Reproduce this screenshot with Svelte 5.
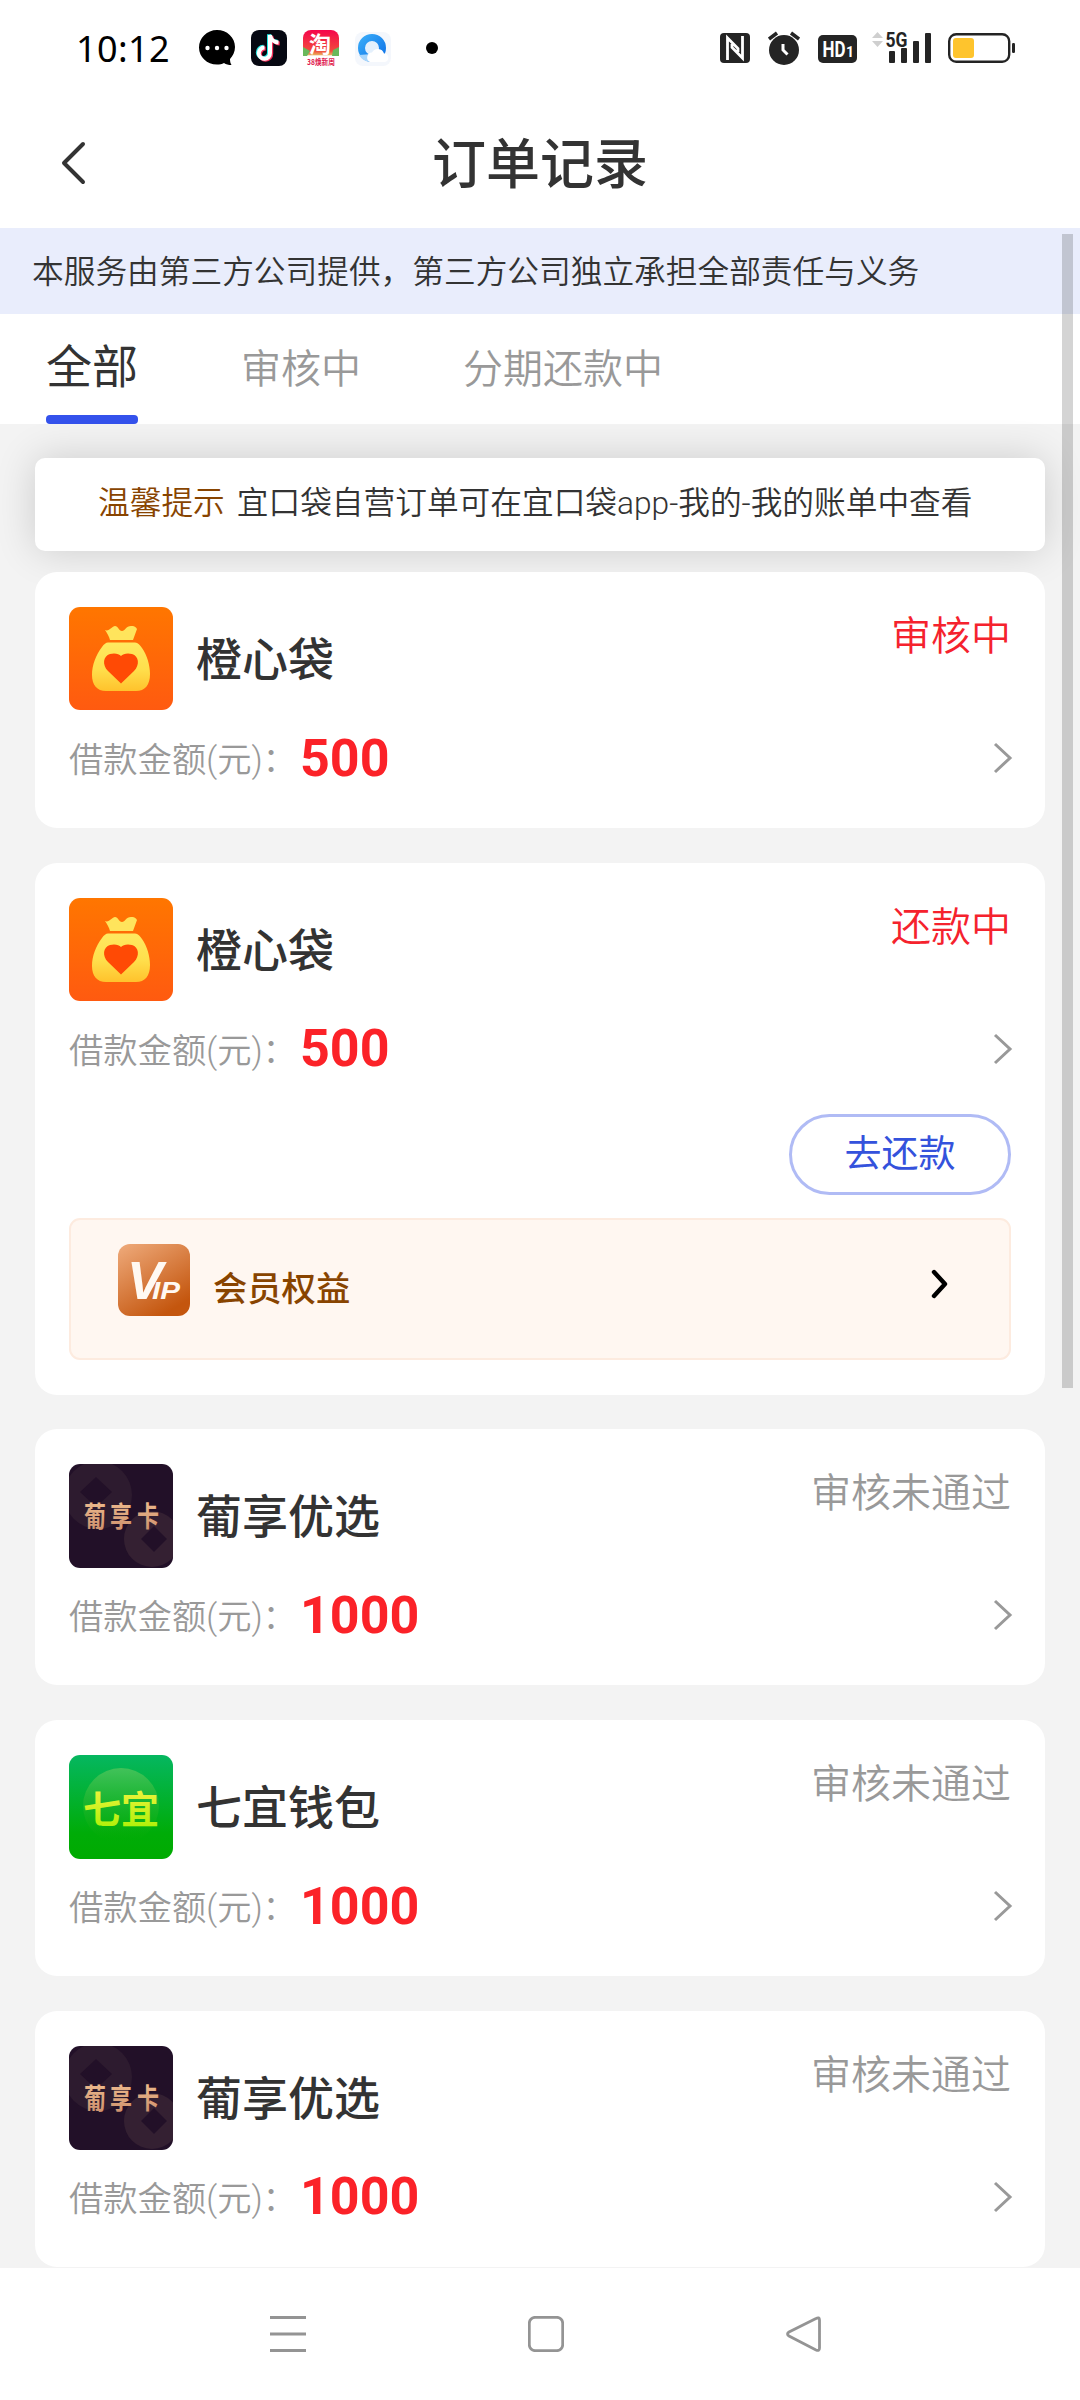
<script lang="ts">
    type Order = {
        id: number;
        brand: "orange" | "grape" | "green";
        name: string;
        status: string;
        active?: boolean;
        amount: number;
        repay?: boolean;
    };

    const tabs = ["全部", "审核中", "分期还款中"];
    let current = $state(0);

    const orders: Order[] = [
        { id: 1, brand: "orange", name: "橙心袋", status: "审核中", active: true, amount: 500 },
        { id: 2, brand: "orange", name: "橙心袋", status: "还款中", active: true, amount: 500, repay: true },
        { id: 3, brand: "grape", name: "葡享优选", status: "审核未通过", amount: 1000 },
        { id: 4, brand: "green", name: "七宜钱包", status: "审核未通过", amount: 1000 },
        { id: 5, brand: "grape", name: "葡享优选", status: "审核未通过", amount: 1000 },
    ];
</script>

<!-- shared gradients -->
<svg class="defs" width="0" height="0" aria-hidden="true">
    <defs>
        <linearGradient id="g-orange" x1="0" y1="0" x2="0" y2="1">
            <stop offset="0" stop-color="#ff7600" />
            <stop offset="1" stop-color="#ff5a10" />
        </linearGradient>
        <linearGradient id="g-bag" x1="0" y1="0" x2="0" y2="1">
            <stop offset="0" stop-color="#ffe960" />
            <stop offset="0.55" stop-color="#ffdf4c" />
            <stop offset="1" stop-color="#ffc22c" />
        </linearGradient>
        <linearGradient id="g-green" x1="0" y1="0" x2="0" y2="1">
            <stop offset="0" stop-color="#05b760" />
            <stop offset="0.75" stop-color="#00ac08" />
            <stop offset="1" stop-color="#00ab00" />
        </linearGradient>
        <linearGradient id="g-disc" x1="0" y1="0" x2="0" y2="1">
            <stop offset="0" stop-color="#42c25a" />
            <stop offset="0.8" stop-color="#0cae10" stop-opacity="0.5" />
            <stop offset="1" stop-color="#00ab00" stop-opacity="0" />
        </linearGradient>
        <linearGradient id="g-lime" x1="0" y1="0" x2="0" y2="1">
            <stop offset="0" stop-color="#fff34a" />
            <stop offset="1" stop-color="#a5f000" />
        </linearGradient>
        <linearGradient id="g-gold" x1="0" y1="0" x2="0" y2="1">
            <stop offset="0" stop-color="#f5c596" />
            <stop offset="1" stop-color="#c98a68" />
        </linearGradient>
        <linearGradient id="g-vip" x1="0" y1="0" x2="0.6" y2="1">
            <stop offset="0" stop-color="#efab7c" />
            <stop offset="1" stop-color="#c4560e" />
        </linearGradient>
        <linearGradient id="g-tao" x1="0" y1="0" x2="0" y2="1">
            <stop offset="0" stop-color="#f5064c" />
            <stop offset="0.6" stop-color="#f24a3c" />
            <stop offset="0.7" stop-color="#e9a45a" />
            <stop offset="0.74" stop-color="#fff" />
        </linearGradient>
        <linearGradient id="g-ring" x1="0" y1="0" x2="1" y2="1">
            <stop offset="0" stop-color="#36a8f7" />
            <stop offset="1" stop-color="#0f74e8" />
        </linearGradient>
    </defs>
</svg>

{#snippet logo(brand: string)}
    <svg class="logo" viewBox="0 0 104 104">
        {#if brand === "orange"}
            <rect width="104" height="103" rx="11" fill="url(#g-orange)" />
            <path d="M36 23C40 25 43 19 46 19S50 24 53 24 57 19 62 19 67 21 68 22L64 33H41C40 29 38 26 36 23Z" fill="#ffe45c" />
            <path d="M39 35.500H66C69 35.500 71 38 73 41C78 48 81 58 81 67C81 78 76 84 67 84H37C28 84 23 78 23 68C23 58 27 48 33 40C35 37 37 35.500 39 35.500Z" fill="url(#g-bag)" />
            <path d="M52 76.500L39 64C33 58 34 49 41 47C46 45.500 50 47 52 49C54 47 58 45.500 63 47C70 49 71 58 65 64Z" fill="#ff4a05" />
        {:else if brand === "grape"}
            <clipPath id="tile"><rect width="104" height="104" rx="11" /></clipPath>
            <g clip-path="url(#tile)">
                <rect width="104" height="104" fill="#221028" />
                <circle cx="29" cy="31" r="34" fill="#2d1b2f" />
                <path d="M27 13L43 28 27 43 11 28Z" fill="#221028" />
                <circle cx="83" cy="75" r="28" fill="#342032" />
                <path d="M85 62L98 75 85 88 72 75Z" fill="#221028" />
            </g>
            <text class="mark grape" transform="translate(0 63) scale(1 1.3)" fill="url(#g-gold)">
                <tspan x="15">葡</tspan><tspan x="41">享</tspan><tspan x="68">卡</tspan>
            </text>
        {:else}
            <rect width="104" height="104" rx="11" fill="url(#g-green)" />
            <circle cx="52" cy="51" r="38" fill="url(#g-disc)" />
            <text class="mark green" y="68" fill="url(#g-lime)">
                <tspan x="14">七</tspan><tspan x="52">宜</tspan>
            </text>
        {/if}
    </svg>
{/snippet}

<div class="screen">
    <div class="statusbar">
        <span class="clock">10:12</span>
        <div class="notifications">
            <svg width="36" height="36" viewBox="0 0 36 36">
                <path d="M18 0C28 0 36 7.500 36 17C36 22 33.800 26 31 29C31 31.500 31.500 33.500 32.500 35C29.500 35 27 34.500 25 33C23 34 20.500 34.500 18 34.500C8 34.500 0 27 0 17.500S8 0 18 0Z" />
                <g fill="#fff"><circle cx="8.500" cy="18" r="2.200" /><circle cx="18" cy="18" r="2.200" /><circle cx="27.500" cy="18" r="2.200" /></g>
            </svg>
            <svg width="36" height="36" viewBox="0 0 36 36">
                <rect width="36" height="36" rx="8" fill="#060812" />
                <g fill="none" stroke-width="4">
                    <path d="M19 5V23A5.600 5.600 0 1 1 13.500 17.600M19 5C19.500 9 22.500 12.200 27.500 12.500" stroke="#25e8e4" transform="translate(-1 -0.800)" />
                    <path d="M19 5V23A5.600 5.600 0 1 1 13.500 17.600M19 5C19.500 9 22.500 12.200 27.500 12.500" stroke="#f8305c" transform="translate(1.200 0.900)" />
                    <path d="M19 5V23A5.600 5.600 0 1 1 13.500 17.600M19 5C19.500 9 22.500 12.200 27.500 12.500" stroke="#fff" />
                </g>
            </svg>
            <svg width="36" height="36" viewBox="0 0 36 36">
                <rect width="36" height="35" rx="8" fill="url(#g-tao)" />
                <path d="M0 17L7 21 4 26H0ZM30 20L36 17V26H29Z" fill="#69b85b" />
                <text class="tao" x="6" y="22">淘</text>
                <text class="sale" x="4" y="34.500" textLength="28" lengthAdjust="spacingAndGlyphs">38焕新周</text>
            </svg>
            <svg width="36" height="36" viewBox="0 0 36 36">
                <rect y="2" width="36" height="34" rx="8" fill="#f4f7fc" />
                <circle cx="17" cy="18" r="10.500" fill="#e4f0fc" stroke="url(#g-ring)" stroke-width="7" />
                <path d="M4 25A14 14 0 0 0 17 32V24Z" fill="#a9d6fb" />
                <path d="M15 32A5 5 0 0 1 17 22.500A6.500 6.500 0 0 1 29 23.500A4.300 4.300 0 0 1 30 32Z" fill="#fff" />
            </svg>
        </div>
        <i class="more"></i>
        <div class="indicators">
            <svg width="30" height="30" viewBox="0 0 30 30">
                <rect width="30" height="30" rx="4" fill="#242424" />
                <path d="M7.500 27V5L18 15.500V19M22.500 3V25L12 14.500V11" fill="none" stroke="#fff" stroke-width="2.800" />
            </svg>
            <svg width="32" height="34" viewBox="0 0 32 34">
                <circle cx="16" cy="19" r="15" fill="#242424" />
                <path d="M1 8L9 2M23 2L31 8" stroke="#242424" stroke-width="3.600" />
                <path d="M15 13V19L19.500 23.500" fill="none" stroke="#fff" stroke-width="3" />
            </svg>
            <svg width="39" height="28" viewBox="0 0 39 28">
                <rect width="39" height="28" rx="5" fill="#242424" />
                <text class="hd" x="4.500" y="22" textLength="23" lengthAdjust="spacingAndGlyphs">HD</text>
                <text class="hd small" x="28" y="22">1</text>
            </svg>
            <svg width="60" height="34" viewBox="0 0 60 34">
                <path d="M0 8L5.500 2 11 8ZM0 11L5.500 17 11 11Z" fill="#cfcfcf" />
                <text class="net" x="13.500" y="17" textLength="22" lengthAdjust="spacingAndGlyphs">5G</text>
                <g fill="#242424">
                    <rect x="17" y="21" width="6" height="12" rx="1" /><rect x="29" y="18" width="6" height="15" rx="1" />
                    <rect x="41" y="11" width="6" height="22" rx="1" /><rect x="53" y="3" width="6" height="30" rx="1" />
                </g>
            </svg>
            <svg width="67" height="30" viewBox="0 0 67 30">
                <rect x="1.200" y="1.200" width="60" height="27.600" rx="7" fill="#fff" stroke="#242424" stroke-width="2.400" />
                <rect x="5" y="5" width="21" height="20" rx="3" fill="#fec42d" />
                <rect x="64" y="10" width="3" height="10" rx="1.200" fill="#242424" />
            </svg>
        </div>
    </div>

    <header class="titlebar">
        <svg class="back" width="26" height="44" viewBox="0 0 26 44"><path d="M23 3L4 22 23 41" /></svg>
        <h1>订单记录</h1>
    </header>

    <main class="content">
        <p class="notice">本服务由第三方公司提供，第三方公司独立承担全部责任与义务</p>

        <nav class="tabs">
            {#each tabs as tab, i}
                <button class="tab" class:current={current === i} onclick={() => (current = i)}>{tab}</button>
            {/each}
        </nav>

        <div class="list">
            <div class="tip"><b>温馨提示</b><span>宜口袋自营订单可在宜口袋app-我的-我的账单中查看</span></div>

            {#each orders as order (order.id)}
                <section class="card">
                    <div class="head">
                        {@render logo(order.brand)}
                        <h2>{order.name}</h2>
                        <span class="status" class:active={order.active}>{order.status}</span>
                    </div>
                    <div class="amount">
                        <span>借款金额(元)：</span>
                        <strong>{order.amount}</strong>
                        <svg width="20" height="32" viewBox="0 0 20 32"><path d="M2 2L17 16 2 30" /></svg>
                    </div>
                    {#if order.repay}
                        <button class="repay">去还款</button>
                        <div class="vip">
                            <svg width="72" height="72" viewBox="0 0 72 72">
                                <rect width="72" height="72" rx="12" fill="url(#g-vip)" />
                                <text class="v" x="9" y="55" textLength="36" lengthAdjust="spacingAndGlyphs">V</text>
                                <text class="ip" x="34" y="55" textLength="28" lengthAdjust="spacingAndGlyphs">IP</text>
                            </svg>
                            <span>会员权益</span>
                            <svg class="go" width="18" height="30" viewBox="0 0 18 30"><path d="M3 3L14 15 3 27" /></svg>
                        </div>
                    {/if}
                </section>
            {/each}
        </div>
        <i class="scrollbar"></i>
    </main>

    <footer class="navbar">
        <svg width="36" height="36" viewBox="0 0 36 36"><path d="M0 1.500H36M0 18H36M0 34.500H36" /></svg>
        <svg width="36" height="36" viewBox="0 0 36 36"><rect x="1.300" y="1.300" width="33.400" height="33.400" rx="6" /></svg>
        <svg width="36" height="36" viewBox="0 0 36 36"><path d="M30 2.500L3 16Q0 18 3 20L30 34Q33.500 35.500 33.500 32V4Q33.500 0.500 30 2.500Z" /></svg>
    </footer>
</div>

<style>
    :global(body) {
        background: #fff;
    }

    .defs {
        position: absolute;
    }

    .screen {
        width: 1080px;
        height: 2400px;
        display: flex;
        flex-direction: column;
        overflow: hidden;
        background: #fff;
        color: #333;
        font-family: Roboto, "Noto Sans CJK SC", sans-serif;
    }

    svg {
        display: block;
        flex: none;
    }

    h1,
    h2,
    p {
        margin: 0;
    }

    button {
        font: inherit;
        border: 0;
        padding: 0;
        background: none;
    }

    /* system status bar */
    .statusbar {
        height: 96px;
        flex: none;
        display: flex;
        align-items: center;
        padding: 0 65px 0 76px;
        box-sizing: border-box;
    }

    .clock {
        width: 123px;
        font-family: "Noto Sans", sans-serif;
        font-size: 36px;
        font-weight: 400;
        letter-spacing: 0.4px;
        color: #000;
        white-space: nowrap;
    }

    .notifications {
        display: flex;
        gap: 16px;
    }

    .more {
        width: 12px;
        height: 12px;
        margin-left: 35px;
        border-radius: 50%;
        background: #000;
    }

    .indicators {
        margin-left: auto;
        display: flex;
        align-items: center;
    }

    .indicators svg:nth-child(2) {
        margin-left: 18px;
    }

    .indicators svg:nth-child(3) {
        margin: 2px 0 0 18px;
    }

    .indicators svg:nth-child(4) {
        margin: -3px 0 0 15px;
    }

    .indicators svg:nth-child(5) {
        margin-left: 16px;
    }

    .tao {
        font: 700 22px "Noto Sans CJK SC", sans-serif;
        fill: #fff;
    }

    .sale {
        font: 700 8px "Noto Sans CJK SC", sans-serif;
        fill: #e0164c;
    }

    .hd {
        font: 700 22px Roboto, sans-serif;
        fill: #fff;
    }

    .hd.small {
        font-size: 14px;
    }

    .net {
        font: 700 20px Roboto, sans-serif;
        fill: #242424;
    }

    .titlebar {
        height: 132px;
        flex: none;
        box-sizing: border-box;
        display: grid;
        grid-template-columns: 200px 1fr 200px;
        align-items: center;
        padding-top: 2px;
    }

    .back {
        margin-left: 60px;
    }

    .back path {
        fill: none;
        stroke: #333;
        stroke-width: 4;
        stroke-linecap: round;
        stroke-linejoin: round;
    }

    h1 {
        padding-top: 6px;
        font-size: 54px;
        font-weight: 500;
        line-height: 80px;
        text-align: center;
    }

    .content {
        position: relative;
        height: 2040px;
        flex: none;
        overflow: hidden;
        background: #f3f3f3;
    }

    .notice {
        height: 86px;
        padding-left: 32px;
        background: #e9edfc;
        font-size: 31.7px;
        font-weight: 350;
        line-height: 90px;
        white-space: nowrap;
    }

    .tabs {
        height: 110px;
        display: flex;
        gap: 103px;
        padding-left: 46px;
        background: #fff;
    }

    .tab {
        box-sizing: border-box;
        height: 110px;
        padding-bottom: 0;
        font-size: 40px;
        font-weight: 350;
        line-height: 112px;
        color: #999;
        white-space: nowrap;
    }

    .tab:last-child {
        margin-left: -1px;
    }

    .tab.current {
        display: flex;
        flex-direction: column;
        padding: 0;
        font-size: 46px;
        font-weight: 400;
        line-height: 107px;
        color: #333;
    }

    .tab.current::after {
        content: "";
        width: 92px;
        height: 9px;
        margin-top: -6px;
        border-radius: 4px;
        background: #3452ec;
    }

    .list {
        display: flex;
        flex-direction: column;
        padding: 34px 35px 0;
    }

    .tip {
        box-sizing: border-box;
        height: 93px;
        display: flex;
        align-items: center;
        gap: 12px;
        padding: 0 0 1px 63px;
        margin-bottom: 21px;
        border-radius: 10px;
        background: #fff;
        box-shadow: 0 0 40px rgba(0, 0, 0, 0.16);
        font-size: 31.7px;
        font-weight: 350;
        line-height: 48px;
        white-space: nowrap;
    }

    .tip b {
        font-weight: 350;
        color: #884400;
    }

    .card {
        position: relative;
        display: flex;
        flex-direction: column;
        padding: 35px 34px;
        margin-bottom: 34.7px;
        border-radius: 22px;
        background: #fff;
    }

    .head {
        display: flex;
        height: 104px;
    }

    .logo {
        width: 104px;
        height: 104px;
    }

    .mark {
        font-family: "Noto Sans CJK SC", sans-serif;
        font-weight: 700;
    }

    .mark.grape {
        font-size: 22px;
    }

    .mark.green {
        font-size: 38px;
    }

    h2 {
        margin-left: 23px;
        font-size: 46px;
        font-weight: 500;
        line-height: 107px;
    }

    .status {
        margin-left: auto;
        font-size: 40px;
        font-weight: 350;
        line-height: 59px;
        color: #999;
    }

    .status.active {
        color: #f5222d;
    }

    .amount {
        box-sizing: border-box;
        display: flex;
        align-items: center;
        height: 82px;
        padding-top: 12px;
    }

    .amount span {
        width: 231px;
        padding-bottom: 2px;
        font-size: 34.3px;
        font-weight: 350;
        color: #999;
        white-space: nowrap;
    }

    .amount strong {
        font-size: 52px;
        font-weight: 700;
        color: #fb2228;
    }

    .amount svg {
        margin: 0 -2px 0 auto;
    }

    .amount path {
        fill: none;
        stroke: #999;
        stroke-width: 3;
    }

    .repay {
        box-sizing: border-box;
        align-self: flex-end;
        width: 222px;
        height: 81px;
        margin: 30px 0 23px;
        border: 3px solid #b0bbf5;
        border-radius: 41px;
        font-size: 37px;
        line-height: 75px;
        color: #3452dc;
    }

    .vip {
        box-sizing: border-box;
        height: 142px;
        display: flex;
        align-items: flex-start;
        padding: 24px 60px 0 47px;
        border: 2px solid #fdebdf;
        border-radius: 11px;
        background: #fff7f1;
    }

    .vip span {
        margin: 20px auto 0 23px;
        font-size: 34.3px;
        font-weight: 500;
        line-height: 50px;
        color: #884400;
    }

    .vip text {
        fill: #fff9f2;
        font-family: "Liberation Sans", sans-serif;
        font-style: italic;
        font-weight: 700;
    }

    .vip .v {
        font-size: 54px;
    }

    .vip .ip {
        font-size: 23px;
    }

    .go {
        margin-top: 25px;
    }

    .go path {
        fill: none;
        stroke: #000;
        stroke-width: 4.4;
        stroke-linecap: round;
        stroke-linejoin: round;
    }

    .scrollbar {
        position: absolute;
        top: 6px;
        right: 7px;
        width: 11px;
        height: 1154px;
        background: rgba(0, 0, 0, 0.17);
    }

    .navbar {
        flex: 1;
        display: flex;
        align-items: center;
        gap: 222px;
        padding-left: 270px;
        background: #fff;
    }

    .navbar path,
    .navbar rect {
        fill: none;
        stroke: #949494;
        stroke-width: 2.8;
    }
</style>
